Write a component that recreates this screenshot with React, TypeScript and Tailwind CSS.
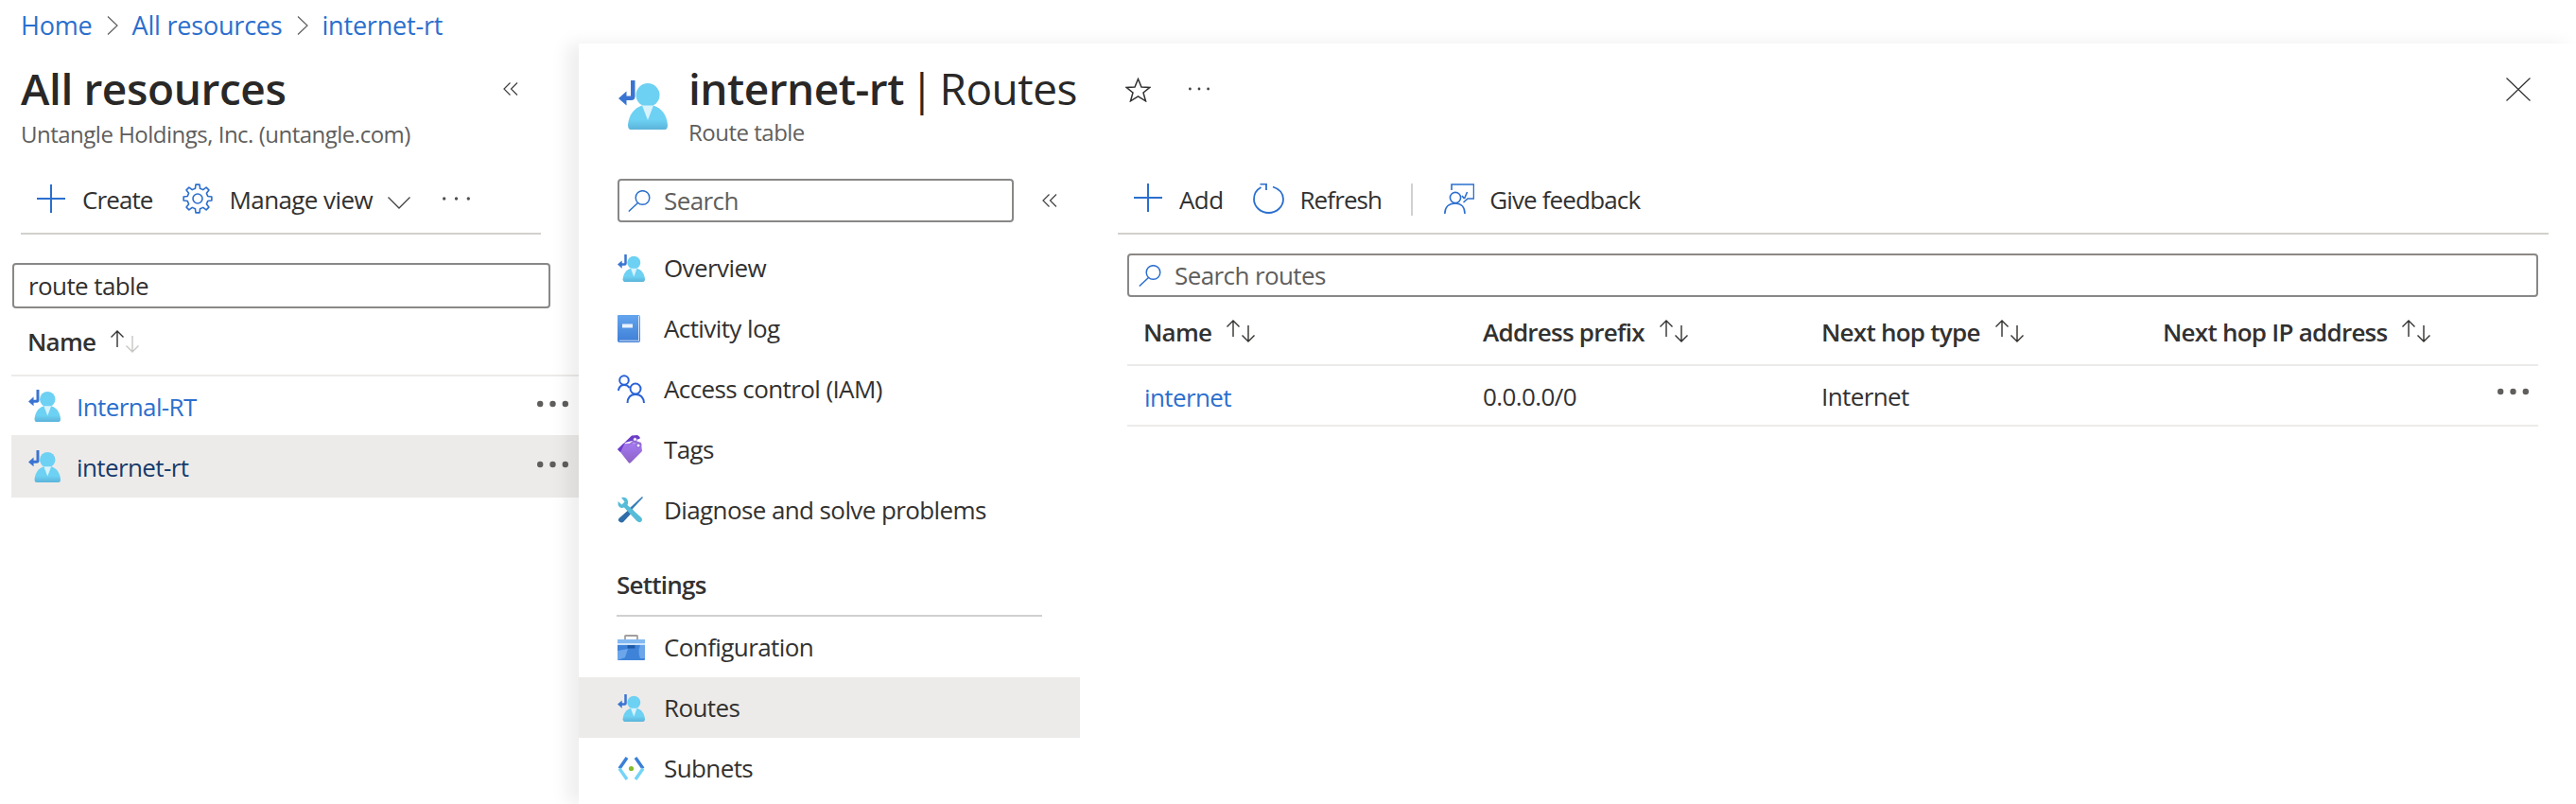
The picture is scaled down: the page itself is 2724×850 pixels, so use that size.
import React from "react";

const LINK = "text-[#2b6fce]";

function gearPath() {
  const teeth = 8;
  const out = 15;
  const inner = 11;
  const cx = 16;
  const cy = 16;
  const pts: string[] = [];
  for (let i = 0; i < teeth; i++) {
    const a = (i * 2 * Math.PI) / teeth;
    const step = (2 * Math.PI) / teeth;
    const list: [number, number][] = [
      [inner, a - step * 0.3],
      [out, a - step * 0.17],
      [out, a + step * 0.17],
      [inner, a + step * 0.3],
    ];
    for (const [r, t] of list) {
      pts.push(`${(cx + r * Math.sin(t)).toFixed(2)} ${(cy - r * Math.cos(t)).toFixed(2)}`);
    }
  }
  return `M${pts.join(" L")} Z`;
}

function Chevron() {
  return (
    <svg width="12" height="20" viewBox="0 0 12 20" fill="none" stroke="#605e5c" strokeWidth="1.2">
      <path d="M1 0.5 L11 10 L1 19.5" />
    </svg>
  );
}
function DoubleLeft() {
  return (
    <svg width="16" height="14" viewBox="0 0 16 14" fill="none" stroke="#404040" strokeWidth="1.2">
      <path d="M7.5 0.5 L1 7 L7.5 13.5 M15 0.5 L8.5 7 L15 13.5" />
    </svg>
  );
}
function PlusIcon() {
  return (
    <svg width="30" height="30" viewBox="0 0 30 30" stroke="#2b6fce" strokeWidth="2" fill="none" className="shrink-0">
      <path d="M15 0 V30 M0 15 H30" />
    </svg>
  );
}
function Dots({ color = "#605e5c", w = 30, r = 1.6 }: { color?: string; w?: number; r?: number }) {
  return (
    <svg width={w} height="8" viewBox={`0 0 ${w} 8`} fill={color}>
      <circle cx={r} cy="4" r={r} />
      <circle cx={w / 2} cy="4" r={r} />
      <circle cx={w - r} cy="4" r={r} />
    </svg>
  );
}
function RouteIcon({ size }: { size: number }) {
  const id = `rg${size}`;
  return (
    <svg width={size} height={size} viewBox="0 0 52 52" className="shrink-0">
      <defs>
        <linearGradient id={id} x1="0" y1="0" x2="0" y2="1">
          <stop offset="0.6" stopColor="#6dd1f3" />
          <stop offset="1" stopColor="#5bb3da" />
        </linearGradient>
      </defs>
      <circle cx="31" cy="15.5" r="12.5" fill="#6dd1f3" />
      <path d="M10 47 C11 36 17 29 25 26.5 H37 C45 29 51 36 52 47 Q52 52 49 52 H13 Q10 52 10 47Z" fill={`url(#${id})`} />
      <path d="M25 26.5 H37 L31 42 Z" fill="#d8f3fc" />
      <path d="M13 0 h4.5 v17 q0 4 -4 4 h-5 v5.5 L0 19 l8.5 -7.5 v5 h4.5 Z" fill="#3a74d2" />
    </svg>
  );
}
function BookIcon() {
  return (
    <svg width="24" height="29" viewBox="0 0 24 29" className="shrink-0">
      <defs>
        <linearGradient id="bk" x1="0" y1="0" x2="0" y2="1">
          <stop offset="0" stopColor="#63a5ee" />
          <stop offset="1" stopColor="#3f7ed6" />
        </linearGradient>
      </defs>
      <path d="M1 0 H22 Q24 0 24 2 V27 Q24 29 22 29 H2 Q0 29 0 27 V1 Q0 0 1 0Z" fill="url(#bk)" />
      <path d="M22 1 H22.8 V27.5 H2 V26.8 H22 Z" fill="#fff" />
      <rect x="5" y="9.5" width="11" height="4" fill="#e8f2fc" />
    </svg>
  );
}
function IamIcon() {
  return (
    <svg width="29" height="30" viewBox="0 0 29 30" fill="none" stroke="#2a62d8" strokeWidth="2" className="shrink-0">
      <circle cx="7" cy="6" r="4.8" />
      <path d="M0.8 17 C1.6 12.8 4 11 7 11 C9.5 11 11.5 12 12.5 14" />
      <circle cx="19" cy="15" r="5.5" />
      <path d="M10.5 30 C10.8 24 14 21 19 21 C24 21 27.5 24 28 30" />
    </svg>
  );
}
function TagIcon() {
  return (
    <svg width="26" height="30" viewBox="0 0 26 30" className="shrink-0">
      <defs>
        <linearGradient id="tg" x1="0" y1="0" x2="0" y2="1">
          <stop offset="0" stopColor="#a67af4" />
          <stop offset="1" stopColor="#8c62c4" />
        </linearGradient>
      </defs>
      <path d="M0 15 L3 18 L12 29.5 Q13 30 14 29 L26 17 L25 8 L6 9 Z" fill="url(#tg)" />
      <path d="M0 15 L15 0.5 L21 0 Q23 1 24 3 L23 4 L8 8 L3 18 Z" fill="#6a3dc9" />
      <path d="M3 18 L17 5 L25 8 L25.5 11 L17 8 Z" fill="#9a72d8" />
      <circle cx="18.5" cy="4.5" r="2" fill="#f4eefc" stroke="#5b32b0" strokeWidth="0.6" />
      <circle cx="22" cy="11" r="2" fill="#f4eefc" stroke="#5b32b0" strokeWidth="0.6" />
    </svg>
  );
}
function ToolsIcon() {
  return (
    <svg width="27" height="28" viewBox="0 0 27 28" className="shrink-0">
      <path d="M26 0 L27 1 L15 14 L13 12 Z" fill="#3a7fb8" />
      <path d="M14 12 L17 15 L6 27 Q4 28 2 26.5 Q0 25 1.5 23 Z" fill="#2e6da8" />
      <path d="M4 1 Q10 0 11 5 Q11.5 7 10.5 9 L25 22 Q27 24.5 25 26.5 Q23 28 20.5 26 L7 11.5 Q4 12.5 2 11 Q0 9 0.5 5 L4.5 8.5 L7.5 5.5 Z" fill="#56bcd8" />
    </svg>
  );
}
function BoxIcon() {
  return (
    <svg width="29" height="27" viewBox="0 0 29 27" className="shrink-0">
      <path d="M8 6 V1.5 Q8 1 9 1 H20 Q21 1 21 1.5 V6" fill="none" stroke="#a19f9d" strokeWidth="1.8" />
      <rect x="0" y="5" width="29" height="22" rx="1" fill="#3f83d9" />
      <rect x="0" y="5" width="29" height="4" fill="#83b9f2" />
      <rect x="0" y="9" width="29" height="2" fill="#cfe4fa" />
      <path d="M0 17 L11 15 L8 24 L0 27Z" fill="#6ba6ea" />
      <path d="M24 11 H29 V25 H24 Q21 18 24 11Z" fill="#6ba6ea" />
      <rect x="10.5" y="11" width="8" height="3.5" fill="#1f5aa8" />
    </svg>
  );
}
function SubnetIcon() {
  return (
    <svg width="29" height="27" viewBox="0 0 29 27" className="shrink-0" fill="none" strokeWidth="3.4">
      <path d="M10 2 L2 13.5" stroke="#3a7fd8" />
      <path d="M2 13.5 L10 25" stroke="#74d4f7" />
      <path d="M19 2 L27 13.5" stroke="#3a7fd8" />
      <path d="M27 13.5 L19 25" stroke="#74d4f7" />
      <circle cx="14.5" cy="13.5" r="2.6" fill="#84bd2c" stroke="none" />
    </svg>
  );
}
function SearchIcon() {
  return (
    <svg width="24" height="23" viewBox="0 0 24 23" fill="none" stroke="#2b6fce" strokeWidth="1.5" className="shrink-0">
      <circle cx="15.5" cy="8" r="7.3" />
      <path d="M10.5 13.5 L0.8 22.5" />
    </svg>
  );
}
function RefreshIcon() {
  return (
    <svg width="33" height="32" viewBox="0 0 33 32" fill="none" stroke="#2b6fce" strokeWidth="1.8" className="shrink-0">
      <path d="M21 3.5 C27 5.5 32 10 32 16.5 C32 24.5 25 31 16.5 31 C8 31 1 24.5 1 16.5 C1 11 4 6.5 8.5 4" />
      <path d="M7.5 0.5 H14 V7" />
    </svg>
  );
}
function FeedbackIcon() {
  return (
    <svg width="32" height="32" viewBox="0 0 32 32" fill="none" stroke="#2b6fce" strokeWidth="1.6" className="shrink-0">
      <path d="M8 7 V1 H31.5 V16 H25 L20.5 20" />
      <circle cx="12" cy="15" r="5.6" />
      <path d="M0.8 32 C0.8 25 5 21 12 21 C18 21 22 25 22 32" />
      <path d="M24.5 9 L21.5 16 M19 13 L21.5 16" />
    </svg>
  );
}
function SortArrows({ active = false }: { active?: boolean }) {
  return (
    <svg width="33" height="24" viewBox="0 0 33 24" fill="none" strokeWidth="1.4" className="shrink-0">
      <path d="M8 18 V1 M1.5 7.5 L8 1 L14.5 7.5" stroke="#323130" />
      <path d="M24 6 V23 M17.5 16.5 L24 23 L30.5 16.5" stroke={active ? "#c8c6c4" : "#323130"} />
    </svg>
  );
}

function NavItem({ icon, label, selected = false }: { icon: React.ReactNode; label: string; selected?: boolean }) {
  return (
    <div className={`flex h-[64px] items-center pl-[41px] ${selected ? "bg-[#edebe9]" : ""}`}>
      <span className="flex w-[49px] shrink-0 items-center">{icon}</span>
      <span className="text-[26px] leading-[36px] text-[#323130]">{label}</span>
    </div>
  );
}

function HeaderCell({ label, width }: { label: string; width: string }) {
  return (
    <div className={`flex items-center ${width}`}>
      <span className="pt-[2px] text-[26px] font-semibold leading-[36px] tracking-[-0.75px] text-[#323130]">{label}</span>
      <span className="ml-[15px]"><SortArrows /></span>
    </div>
  );
}

export default function App() {
  return (
    <div className="flex h-[850px] w-[2724px] flex-col overflow-hidden bg-white font-['Open_Sans','Noto_Sans',sans-serif] tracking-[-0.6px]">
      <nav className={`flex h-[46px] items-start gap-[15px] pl-[22px] pt-[9px] text-[27px] leading-[36px] tracking-[-0.2px] ${LINK}`}>
        <span>Home</span>
        <span className="mt-[8px]"><Chevron /></span>
        <span>All resources</span>
        <span className="mt-[8px]"><Chevron /></span>
        <span>internet-rt</span>
      </nav>

      <div className="flex min-h-0 flex-1">
        <aside className="w-[612px] shrink-0">
          <div className="flex h-[78px] items-end pl-[22px]">
            <h1 className="text-[46px] font-semibold leading-[62px] tracking-[-0.4px] text-[#292827]">All resources</h1>
            <span className="mb-[23px] ml-[230px]"><DoubleLeft /></span>
          </div>
          <div className="pl-[22px] text-[24px] leading-[36px] tracking-[-0.5px] text-[#605e5c]">Untangle Holdings, Inc. (untangle.com)</div>

          <div className="ml-[22px] mt-[32px] flex h-[56px] w-[550px] items-start border-b-2 border-[#d2d0ce] pl-[17px]">
            <span className="mt-[3px]"><PlusIcon /></span>
            <span className="ml-[18px] text-[26px] leading-[38px] tracking-[-0.9px] text-[#323130]">Create</span>
            <svg width="32" height="32" viewBox="0 0 32 32" fill="none" stroke="#2b6fce" strokeWidth="1.6" strokeLinejoin="round" className="ml-[31px] mt-[2px] shrink-0">
              <path d={gearPath()} />
              <circle cx="16" cy="16" r="5" />
            </svg>
            <span className="ml-[18px] text-[26px] leading-[38px] text-[#323130]">Manage view</span>
            <svg width="24" height="13" viewBox="0 0 24 13" fill="none" stroke="#404040" strokeWidth="1.3" className="ml-[16px] mt-[16px] shrink-0">
              <path d="M0.5 0.5 L12 12 L23.5 0.5" />
            </svg>
            <span className="ml-[34px] mt-[14px]"><Dots w={29} r={1.7} color="#505050" /></span>
          </div>

          <div className="ml-[13px] mt-[30px] flex h-[48px] w-[569px] items-center rounded-[4px] border-2 border-[#8a8886] pl-[15px] text-[26px] text-[#323130]">
            route table
          </div>

          <div className="flex h-[70px] items-center pl-[29px]">
            <span className="text-[26px] font-semibold leading-[36px] tracking-[-0.75px] text-[#323130]">Name</span>
            <span className="ml-[15px]"><SortArrows active /></span>
          </div>

          <div className="ml-[12px] flex h-[64px] items-center border-t-2 border-[#edebe9] pl-[18px]">
            <RouteIcon size={34} />
            <span className={`ml-[17px] flex-1 pt-[2px] text-[26px] ${LINK}`}>Internal-RT</span>
            <span className="mb-[4px] mr-[11px]"><Dots w={33} r={3.2} /></span>
          </div>
          <div className="ml-[12px] flex h-[66px] items-center bg-[#edebe9] pl-[18px]">
            <RouteIcon size={34} />
            <span className="ml-[17px] flex-1 pt-[3px] text-[26px] text-[#173a6b]">internet-rt</span>
            <span className="mb-[4px] mr-[11px]"><Dots w={33} r={3.2} /></span>
          </div>
        </aside>

        <section className="relative z-10 flex min-w-0 flex-1 flex-col bg-white shadow-[-12px_0_18px_rgba(0,0,0,0.07)]">
          <header className="flex h-[124px] shrink-0 items-start pl-[42px] pt-[21px]">
            <span className="mt-[18px]"><RouteIcon size={52} /></span>
            <div className="ml-[22px]">
              <div className="text-[46px] leading-[52px] tracking-[-0.5px] text-[#292827]">
                <span className="font-semibold">internet-rt</span>
                <span className="ml-[-5px]"> | </span>
                <span className="ml-[-5px]">Routes</span>
              </div>
              <div className="mt-[3px] text-[24px] leading-[36px] tracking-[-0.5px] text-[#605e5c]">Route table</div>
            </div>
            <svg width="27" height="26" viewBox="0 0 27 26" fill="none" stroke="#323130" strokeWidth="1.5" className="ml-[51px] mt-[15px] shrink-0">
              <path d="M13.5 1.5 L17 10 L26 10.4 L19 16 L21.5 24.8 L13.5 19.8 L5.5 24.8 L8 16 L1 10.4 L10 10 Z" />
            </svg>
            <span className="ml-[40px] mt-[23px]"><Dots w={22} r={1.4} color="#404040" /></span>
            <svg width="26" height="25" viewBox="0 0 26 25" fill="none" stroke="#323130" strokeWidth="1.2" className="ml-auto mr-[48px] mt-[15px] shrink-0">
              <path d="M0.5 0.5 L25.5 24.5 M25.5 0.5 L0.5 24.5" />
            </svg>
          </header>

          <div className="flex min-h-0 flex-1">
            <div className="w-[530px] shrink-0">
              <div className="flex h-[81px] items-start pl-[41px] pt-[19px]">
                <div className="flex h-[46px] w-[419px] items-center rounded-[4px] border-2 border-[#8a8886] pl-[9px]">
                  <SearchIcon />
                  <span className="ml-[14px] text-[26px] text-[#605e5c]">Search</span>
                </div>
                <span className="ml-[30px] mt-[16px]"><DoubleLeft /></span>
              </div>
              <NavItem icon={<RouteIcon size={29} />} label="Overview" />
              <NavItem icon={<BookIcon />} label="Activity log" />
              <NavItem icon={<IamIcon />} label="Access control (IAM)" />
              <NavItem icon={<TagIcon />} label="Tags" />
              <NavItem icon={<ToolsIcon />} label="Diagnose and solve problems" />
              <div className="ml-[40px] flex h-[81px] w-[450px] items-end border-b-2 border-[#d2d0ce] pb-[14px] text-[26px] font-semibold leading-[36px] tracking-[-0.75px] text-[#323130]">
                Settings
              </div>
              <NavItem icon={<BoxIcon />} label="Configuration" />
              <NavItem icon={<RouteIcon size={29} />} label="Routes" selected />
              <NavItem icon={<SubnetIcon />} label="Subnets" />
            </div>

            <div className="min-w-0 flex-1">
              <div className="ml-[40px] mr-[29px] flex h-[78px] items-start border-b-2 border-[#d2d0ce] pl-[17px] pt-[24px]">
                <PlusIcon />
                <span className="ml-[18px] text-[26px] leading-[34px] text-[#323130]">Add</span>
                <span className="ml-[32px]"><RefreshIcon /></span>
                <span className="ml-[16px] text-[26px] leading-[34px] tracking-[-0.9px] text-[#323130]">Refresh</span>
                <span className="ml-[31px] h-[34px] w-[2px] bg-[#d2d0ce]" />
                <span className="ml-[33px]"><FeedbackIcon /></span>
                <span className="ml-[16px] text-[26px] leading-[34px] tracking-[-0.85px] text-[#323130]">Give feedback</span>
              </div>

              <div className="ml-[50px] mr-[40px] mt-[20px] flex h-[46px] items-center rounded-[4px] border-2 border-[#8a8886] pl-[10px]">
                <SearchIcon />
                <span className="ml-[14px] text-[26px] text-[#605e5c]">Search routes</span>
              </div>

              <div className="ml-[50px] mr-[40px] flex h-[73px] items-center border-b-2 border-[#edebe9] pl-[17px]">
                <HeaderCell label="Name" width="w-[359px]" />
                <HeaderCell label="Address prefix" width="w-[358px]" />
                <HeaderCell label="Next hop type" width="w-[361px]" />
                <HeaderCell label="Next hop IP address" width="flex-1" />
              </div>

              <div className="ml-[50px] mr-[40px] flex h-[64px] items-center border-b-2 border-[#edebe9] pl-[18px] text-[26px] text-[#323130]">
                <span className={`w-[358px] pt-[4px] ${LINK}`}>internet</span>
                <span className="w-[358px] pt-[2px]">0.0.0.0/0</span>
                <span className="w-[361px] pt-[2px]">Internet</span>
                <span className="mb-[8px] ml-auto mr-[10px]"><Dots w={33} r={3.2} /></span>
              </div>
            </div>
          </div>
        </section>
      </div>
    </div>
  );
}
